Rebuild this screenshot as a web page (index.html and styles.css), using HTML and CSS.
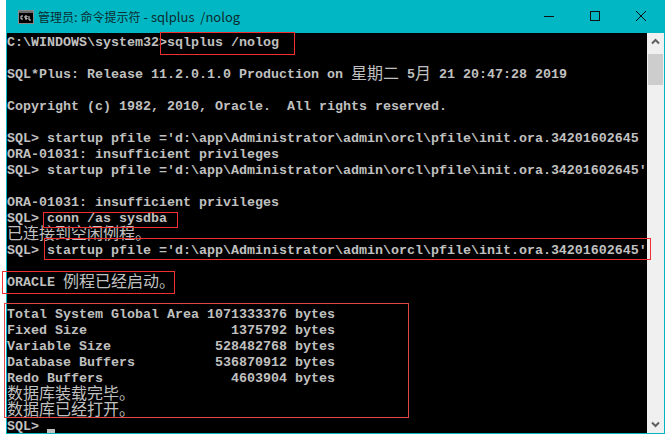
FILE: index.html
```html
<!DOCTYPE html>
<html lang="zh-CN">
<head>
<meta charset="utf-8">
<title>管理员: 命令提示符 - sqlplus /nolog</title>
<link rel="stylesheet" href="styles.css">
</head>
<body>
<div class="window">
  <header class="titlebar">
    <svg class="app-icon" width="16" height="14" viewBox="0 0 16 14"><rect x="0" y="0" width="16" height="14" fill="#6a6a6a"/><rect x="1" y="3" width="14" height="10" fill="#000"/><rect x="0.5" y="0.5" width="15" height="13" fill="none" stroke="#8a8a8a"/><path d="M3 6h2M3 6v3M3 9h2M7 6h2v1M7 8h2v1M7 6v2M7 9h2M11 6v4h2" stroke="#ddd" fill="none"/></svg>
    <span class="title"><span class="title-cjk">管理员</span>: <span class="title-cjk">命令提示符</span> - sqlplus&nbsp; /nolog</span>
    <div class="controls">
      <svg class="ctl" width="46" height="33" viewBox="0 0 46 33"><path d="M18 16.500h10" stroke="#111"/></svg>
      <svg class="ctl" width="46" height="33" viewBox="0 0 46 33"><rect x="18.500" y="11.500" width="9" height="9" fill="none" stroke="#111"/></svg>
      <svg class="ctl" width="46" height="33" viewBox="0 0 46 33"><path d="M18 11l10 10M28 11l-10 10" stroke="#111" fill="none"/></svg>
    </div>
  </header>
  <div class="client">
    <main class="console">
<pre class="text">C:\WINDOWS\system32&gt;sqlplus /nolog

SQL*Plus: Release 11.2.0.1.0 Production on <span class="cjk">星期二</span> 5<span class="cjk">月</span> 21 20:47:28 2019

Copyright (c) 1982, 2010, Oracle.  All rights reserved.

SQL&gt; startup pfile ='d:\app\Administrator\admin\orcl\pfile\init.ora.34201602645
ORA-01031: insufficient privileges
SQL&gt; startup pfile ='d:\app\Administrator\admin\orcl\pfile\init.ora.34201602645'

ORA-01031: insufficient privileges
SQL&gt; conn /as sysdba
<span class="cjk">已连接到空闲例程。</span>
SQL&gt; startup pfile ='d:\app\Administrator\admin\orcl\pfile\init.ora.34201602645'

ORACLE <span class="cjk">例程已经启动。</span>

Total System Global Area 1071333376 bytes
Fixed Size                  1375792 bytes
Variable Size             528482768 bytes
Database Buffers          536870912 bytes
Redo Buffers                4603904 bytes
<span class="cjk">数据库装载完毕。</span>
<span class="cjk">数据库已经打开。</span>
SQL&gt; <span class="cursor"></span></pre>
      <div class="mark mark-sqlplus"></div>
      <div class="mark mark-conn"></div>
      <div class="mark mark-startup"></div>
      <div class="mark mark-oracle"></div>
      <div class="mark mark-sga"></div>
    </main>
    <aside class="scrollbar">
      <svg class="arrow" width="17" height="17" viewBox="0 0 17 17"><path d="M5 10.500l3.500-3.500 3.500 3.500" fill="none" stroke="#606060" stroke-width="2"/></svg>
      <div class="track"><div class="thumb"></div></div>
      <svg class="arrow" width="17" height="17" viewBox="0 0 17 17"><path d="M5 6.500l3.500 3.500 3.500-3.500" fill="none" stroke="#606060" stroke-width="2"/></svg>
    </aside>
  </div>
</div>
</body>
</html>
```
FILE: styles.css
```css
* { box-sizing: border-box; }
html, body { margin: 0; height: 100%; background: #fff; overflow: hidden; }
body { padding: 0 3px 0 6px; }
.window {
  height: 434px;
  display: flex;
  flex-direction: column;
  border: 1px solid #00b7c3;
  border-top: 0;
  background: #00b7c3;
}
.titlebar {
  height: 33px;
  display: flex;
  align-items: center;
  flex: none;
  padding-left: 11px;
  background: #00b7c3;
}
.app-icon { flex: none; margin-right: 4px; }
.title {
  font-family: "Noto Sans CJK SC", "Noto Sans", sans-serif;
  font-size: 13px;
  color: #0c2c30;
  white-space: pre;
}
.title-cjk { font-size: 12px; }
.controls { margin-left: auto; display: flex; }
.ctl { display: block; }
.client { flex: 1; min-height: 0; display: flex; }
.console { flex: 1; min-width: 0; position: relative; z-index: 1; background: #000; padding-top: 2px; }
.text {
  margin: 0;
  height: 398px;
  overflow: hidden;
  font-family: "Liberation Mono", "DejaVu Sans Mono", monospace;
  font-weight: bold;
  font-size: 13.33px;
  line-height: 16px;
  color: #c0c0c0;
  white-space: pre;
}
.cjk {
  font-family: "Noto Sans CJK SC", sans-serif;
  font-weight: normal;
  font-size: 16px;
  line-height: 0;
  vertical-align: -1px;
}
.cursor {
  display: inline-block;
  width: 8px;
  height: 4px;
  margin-bottom: -3px;
  background: #c0c0c0;
}
.mark { position: absolute; border: 1px solid #f03030; }
.mark-sqlplus { left: 153px; top: -1px; width: 135px; height: 23px; }
.mark-conn { left: 36px; top: 179px; width: 135px; height: 16px; }
.mark-startup { left: 37px; top: 205px; width: 607px; height: 22px; }
.mark-oracle { left: -5px; top: 238px; width: 173px; height: 23px; }
.mark-sga { left: -3px; top: 270px; width: 405px; height: 115px; border-color: #e04848; }
.scrollbar {
  width: 17px;
  flex: none;
  display: flex;
  flex-direction: column;
  background: #f0f0f0;
}
.arrow { display: block; flex: none; }
.track { flex: 1; padding: 4px 1px 0; }
.thumb { height: 31px; background: #cdcdcd; }
```
